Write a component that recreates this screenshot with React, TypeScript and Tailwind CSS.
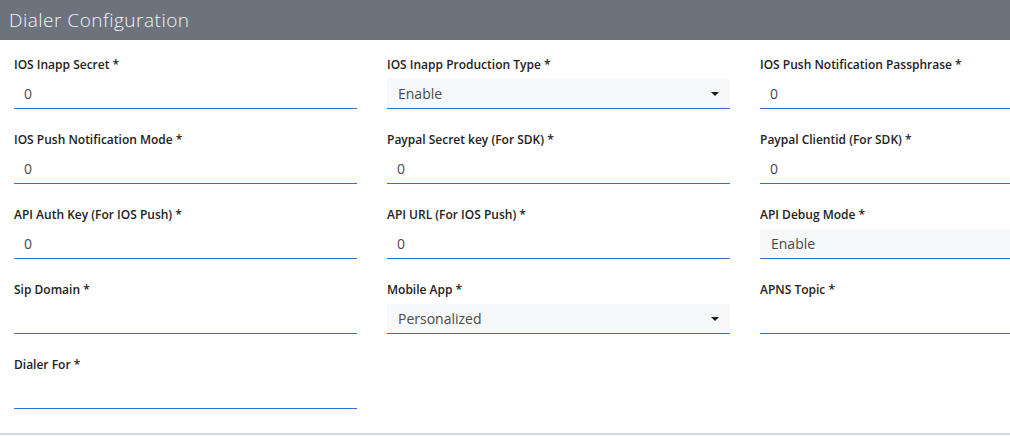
import React from "react";

type Field = { label: string; value?: string; kind: "input" | "select" | "readonly" };

const fields: Field[] = [
  { label: "IOS Inapp Secret *", value: "0", kind: "input" },
  { label: "IOS Inapp Production Type *", value: "Enable", kind: "select" },
  { label: "IOS Push Notification Passphrase *", value: "0", kind: "input" },
  { label: "IOS Push Notification Mode *", value: "0", kind: "input" },
  { label: "Paypal Secret key (For SDK) *", value: "0", kind: "input" },
  { label: "Paypal Clientid (For SDK) *", value: "0", kind: "input" },
  { label: "API Auth Key (For IOS Push) *", value: "0", kind: "input" },
  { label: "API URL (For IOS Push) *", value: "0", kind: "input" },
  { label: "API Debug Mode *", value: "Enable", kind: "readonly" },
  { label: "Sip Domain *", value: "", kind: "input" },
  { label: "Mobile App *", value: "Personalized", kind: "select" },
  { label: "APNS Topic *", value: "", kind: "input" },
  { label: "Dialer For *", value: "", kind: "input" },
];

function Control({ f }: { f: Field }) {
  const base =
    "h-[30px] w-full border-b border-[#2a76d2] flex items-center text-[14px] text-[#4a4a4a] pl-[10px]";
  if (f.kind === "select") {
    return (
      <div className={base + " bg-[#f7f8fa] pl-[11px] pr-[11px] justify-between"}>
        <span>{f.value}</span>
        <svg width="8" height="4" viewBox="0 0 8 4">
          <path d="M0 0 L8 0 L4 4 Z" fill="#1a1a1a" />
        </svg>
      </div>
    );
  }
  if (f.kind === "readonly") {
    return <div className={base + " bg-[#f7f8fa] pl-[11px]"}>{f.value}</div>;
  }
  return <div className={base}>{f.value}</div>;
}

export default function App() {
  return (
    <div
      className="w-[1010px] h-[436px] overflow-hidden bg-white"
      style={{ fontFamily: '"Open Sans", "Liberation Sans", sans-serif' }}
    >
      <div className="h-[40px] bg-[#6c737d] flex items-center pl-[9px]">
        <span className="text-[19px] font-light text-[#f2f3f5] tracking-[0.5px]">
          Dialer Configuration
        </span>
      </div>
      <div className="border-b-2 border-[#d3d7de] pb-[24px] pt-[17px] pl-[14px]">
        <div className="grid grid-cols-[343px_343px_343px] gap-x-[30px] gap-y-[23px] w-[1089px]">
          {fields.map((f) => (
            <div key={f.label} className="flex flex-col">
              <div className="text-[12px] leading-[16px] font-semibold text-[#222] mb-[6px]">
                {f.label}
              </div>
              <Control f={f} />
            </div>
          ))}
        </div>
      </div>
    </div>
  );
}
